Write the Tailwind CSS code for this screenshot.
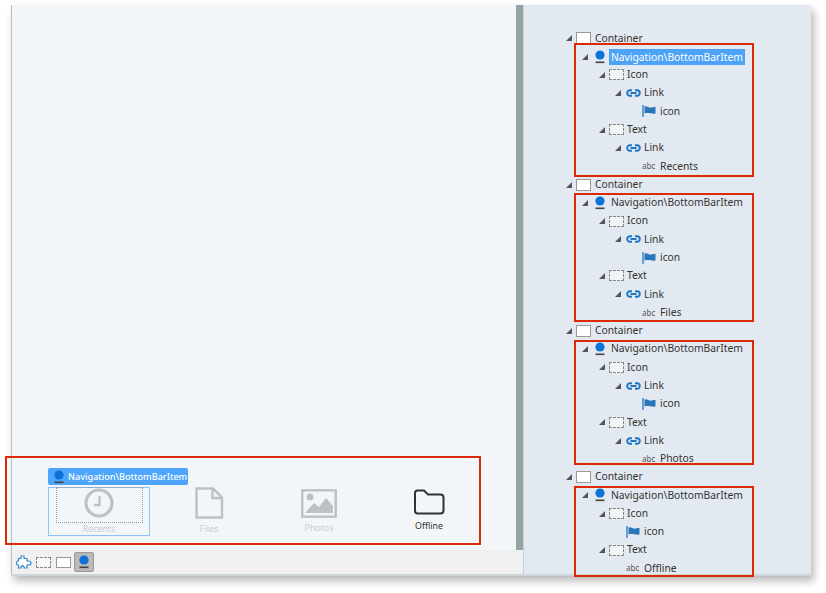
<!DOCTYPE html>
<html><head><meta charset="utf-8"><title>BottomBar</title>
<script src="https://cdn.jsdelivr.net/npm/@tailwindcss/browser@4"></script></head>
<body class="bg-white w-[826px] h-[593px] overflow-hidden relative font-['Noto_Sans',sans-serif]">
<svg width="0" height="0" class="absolute">
<symbol id="tri" viewBox="0 0 6 6"><path d="M6 0V6H0Z" fill="#555"/></symbol>
<symbol id="nav" viewBox="0 0 10 14"><circle cx="5" cy="5" r="4.6" fill="#0a72d8"/><rect x="0.5" y="11.5" width="9" height="1.6" fill="#444"/></symbol>
<symbol id="link" viewBox="0 0 15 8"><path d="M6 1.2H4a2.8 2.8 0 0 0 0 5.6h2M9 1.2h2a2.8 2.8 0 0 1 0 5.6H9M4.5 4h6" fill="none" stroke="#1f76c4" stroke-width="1.9"/></symbol>
<symbol id="flag" viewBox="0 0 14 12"><path d="M1 0V12" stroke="#2f82cc" stroke-width="1.4"/><path d="M2.5 1.5C5 .5 7 3 9 2.6L13.5 1.8V8.5C10 9.5 7 7.2 2.5 8.5Z" fill="#2a76bd"/></symbol>
</svg>

<div class="absolute left-[11px] top-[5px] w-[800px] h-[571px] flex shadow-[3px_5px_8px_rgba(0,0,0,0.28)] bg-[#f0f0f0] border-b-2 border-[#cfd6d9]">
  <div class="w-[512px] flex flex-col">
    <div class="flex flex-1 min-h-0">
      <div class="flex-1 bg-[#f2f6f9] border-l border-[#b4c0c6] flex flex-col justify-end pb-[13px] pl-[32px]">
        <div class="flex h-[50px] items-start">
          <div class="w-[110px] h-[50px] flex flex-col items-center text-[#c9cccf]">
            <svg width="30" height="30" viewBox="0 0 30 30" class="mt-[1px]"><circle cx="15" cy="15" r="13" fill="none" stroke="#bdc1c3" stroke-width="3.200"/><path d="M15.500 8V17H10" fill="none" stroke="#bdc1c3" stroke-width="2.400"/></svg>
            <span class="text-[8.800px] leading-[12px] mt-[5px]">Recents</span>
          </div>
          <div class="w-[110px] h-[50px] flex flex-col items-center text-[#c9cccf]">
            <svg width="30" height="32" viewBox="0 0 30 32"><path d="M2.500 1.500H19L28 10.500V30.500H2.500ZM18.500 1.500V11H28" fill="none" stroke="#bdc1c3" stroke-width="2.400"/></svg>
            <span class="text-[8.800px] leading-[12px] mt-[4px]">Files</span>
          </div>
          <div class="w-[110px] h-[50px] flex flex-col items-center text-[#c9cccf]">
            <svg width="36" height="29" viewBox="0 0 36 29" class="mt-[2px]"><rect x="1.300" y="1.300" width="33.400" height="26.400" fill="none" stroke="#bdc1c3" stroke-width="2.400"/><circle cx="9" cy="8" r="3.500" fill="#bdc1c3"/><path d="M4 24L13 14L18 18L25 9L32 17V24Z" fill="#bdc1c3"/></svg>
            <span class="text-[8.800px] leading-[12px] mt-[4px]">Photos</span>
          </div>
          <div class="w-[110px] h-[50px] flex flex-col items-center text-[#333]">
            <svg width="32" height="26" viewBox="0 0 32 26" class="mt-[2px]"><path d="M2 4Q2 1.500 4.500 1.500H11L15 5.500H27.500Q30.500 5.500 30.500 8.500V21.500Q30.500 24.500 27.500 24.500H4.500Q2 24.500 2 21.500Z" fill="none" stroke="#2e3338" stroke-width="2"/></svg>
            <span class="text-[8.800px] leading-[12px] mt-[5px]">Offline</span>
          </div>
        </div>
      </div>
      <div class="w-[7px] bg-[#95a3a5]"></div>
    </div>
    <div class="h-[24px] shrink-0 bg-[#f0f0f0] border-l border-[#b4c0c6] flex items-center pl-[4px]">
      <svg width="16" height="14" viewBox="0 0 16 14"><path d="M5 1H8V3.500H11V6H12.500Q15 6 15 8T12.500 10H11V13H8V11.500Q6.500 10 5 11.500V13H2.500V10H1.500Q.5 9.500 .5 8T1.500 6H2.500V3.500H5Z" fill="#fff" stroke="#3a86d0" stroke-width="1.200"/></svg>
      <div class="w-[15px] h-[11px] ml-[4px] border border-dashed border-[#888] bg-[#f8f8f8]"></div>
      <div class="w-[15px] h-[11px] ml-[5px] border border-[#999] bg-white"></div>
      <div class="w-[20px] h-[20px] ml-[3px] bg-[#b9b9b9] border border-[#999] rounded-[2px] flex items-center justify-center">
        <svg width="10" height="14"><use href="#nav"/></svg>
      </div>
    </div>
  </div>

  <div class="flex-1 bg-[#e3e9f0] border-l border-[#c8d2d8] pl-[42px] pt-[24.200px] text-[10.300px] text-[#333] overflow-hidden">
    <!-- group 1 -->
    <div class="h-[18.290px] flex items-center"><svg width="6" height="6" class="mr-[4px]"><use href="#tri"/></svg><div class="w-[15px] h-[12px] bg-white border border-[#999] mr-[4px]"></div><span>Container</span></div>
    <div class="h-[18.290px] flex items-center pl-[16px]"><svg width="6" height="6" class="mr-[7px]"><use href="#tri"/></svg><svg width="10" height="14" class="mr-[4px]"><use href="#nav"/></svg><span class="bg-[#4da3f7] text-white px-[2px] h-[16px] leading-[16px]">Navigation\BottomBarItem</span></div>
    <div class="h-[18.290px] flex items-center pl-[33px]"><svg width="6" height="6" class="mr-[4px]"><use href="#tri"/></svg><div class="w-[15px] h-[11px] bg-[#f2f5f8] border border-dashed border-[#888] mr-[3px]"></div><span>Icon</span></div>
    <div class="h-[18.290px] flex items-center pl-[49px]"><svg width="6" height="6" class="mr-[5px]"><use href="#tri"/></svg><svg width="15" height="8" class="mr-[3px]"><use href="#link"/></svg><span>Link</span></div>
    <div class="h-[18.290px] flex items-center pl-[76px]"><svg width="14" height="12" class="mr-[4px]"><use href="#flag"/></svg><span>icon</span></div>
    <div class="h-[18.290px] flex items-center pl-[33px]"><svg width="6" height="6" class="mr-[4px]"><use href="#tri"/></svg><div class="w-[15px] h-[11px] bg-[#f2f5f8] border border-dashed border-[#888] mr-[3px]"></div><span>Text</span></div>
    <div class="h-[18.290px] flex items-center pl-[49px]"><svg width="6" height="6" class="mr-[5px]"><use href="#tri"/></svg><svg width="15" height="8" class="mr-[3px]"><use href="#link"/></svg><span>Link</span></div>
    <div class="h-[18.290px] flex items-center pl-[76px]"><span class="w-[14px] mr-[4px] text-[8px] leading-none text-[#555]">abc</span><span>Recents</span></div>
    <!-- group 2 -->
    <div class="h-[18.290px] flex items-center"><svg width="6" height="6" class="mr-[4px]"><use href="#tri"/></svg><div class="w-[15px] h-[12px] bg-white border border-[#999] mr-[4px]"></div><span>Container</span></div>
    <div class="h-[18.290px] flex items-center pl-[16px]"><svg width="6" height="6" class="mr-[7px]"><use href="#tri"/></svg><svg width="10" height="14" class="mr-[4px]"><use href="#nav"/></svg><span class="px-[2px]">Navigation\BottomBarItem</span></div>
    <div class="h-[18.290px] flex items-center pl-[33px]"><svg width="6" height="6" class="mr-[4px]"><use href="#tri"/></svg><div class="w-[15px] h-[11px] bg-[#f2f5f8] border border-dashed border-[#888] mr-[3px]"></div><span>Icon</span></div>
    <div class="h-[18.290px] flex items-center pl-[49px]"><svg width="6" height="6" class="mr-[5px]"><use href="#tri"/></svg><svg width="15" height="8" class="mr-[3px]"><use href="#link"/></svg><span>Link</span></div>
    <div class="h-[18.290px] flex items-center pl-[76px]"><svg width="14" height="12" class="mr-[4px]"><use href="#flag"/></svg><span>icon</span></div>
    <div class="h-[18.290px] flex items-center pl-[33px]"><svg width="6" height="6" class="mr-[4px]"><use href="#tri"/></svg><div class="w-[15px] h-[11px] bg-[#f2f5f8] border border-dashed border-[#888] mr-[3px]"></div><span>Text</span></div>
    <div class="h-[18.290px] flex items-center pl-[49px]"><svg width="6" height="6" class="mr-[5px]"><use href="#tri"/></svg><svg width="15" height="8" class="mr-[3px]"><use href="#link"/></svg><span>Link</span></div>
    <div class="h-[18.290px] flex items-center pl-[76px]"><span class="w-[14px] mr-[4px] text-[8px] leading-none text-[#555]">abc</span><span>Files</span></div>
    <!-- group 3 -->
    <div class="h-[18.290px] flex items-center"><svg width="6" height="6" class="mr-[4px]"><use href="#tri"/></svg><div class="w-[15px] h-[12px] bg-white border border-[#999] mr-[4px]"></div><span>Container</span></div>
    <div class="h-[18.290px] flex items-center pl-[16px]"><svg width="6" height="6" class="mr-[7px]"><use href="#tri"/></svg><svg width="10" height="14" class="mr-[4px]"><use href="#nav"/></svg><span class="px-[2px]">Navigation\BottomBarItem</span></div>
    <div class="h-[18.290px] flex items-center pl-[33px]"><svg width="6" height="6" class="mr-[4px]"><use href="#tri"/></svg><div class="w-[15px] h-[11px] bg-[#f2f5f8] border border-dashed border-[#888] mr-[3px]"></div><span>Icon</span></div>
    <div class="h-[18.290px] flex items-center pl-[49px]"><svg width="6" height="6" class="mr-[5px]"><use href="#tri"/></svg><svg width="15" height="8" class="mr-[3px]"><use href="#link"/></svg><span>Link</span></div>
    <div class="h-[18.290px] flex items-center pl-[76px]"><svg width="14" height="12" class="mr-[4px]"><use href="#flag"/></svg><span>icon</span></div>
    <div class="h-[18.290px] flex items-center pl-[33px]"><svg width="6" height="6" class="mr-[4px]"><use href="#tri"/></svg><div class="w-[15px] h-[11px] bg-[#f2f5f8] border border-dashed border-[#888] mr-[3px]"></div><span>Text</span></div>
    <div class="h-[18.290px] flex items-center pl-[49px]"><svg width="6" height="6" class="mr-[5px]"><use href="#tri"/></svg><svg width="15" height="8" class="mr-[3px]"><use href="#link"/></svg><span>Link</span></div>
    <div class="h-[18.290px] flex items-center pl-[76px]"><span class="w-[14px] mr-[4px] text-[8px] leading-none text-[#555]">abc</span><span>Photos</span></div>
    <!-- group 4 -->
    <div class="h-[18.290px] flex items-center"><svg width="6" height="6" class="mr-[4px]"><use href="#tri"/></svg><div class="w-[15px] h-[12px] bg-white border border-[#999] mr-[4px]"></div><span>Container</span></div>
    <div class="h-[18.290px] flex items-center pl-[16px]"><svg width="6" height="6" class="mr-[7px]"><use href="#tri"/></svg><svg width="10" height="14" class="mr-[4px]"><use href="#nav"/></svg><span class="px-[2px]">Navigation\BottomBarItem</span></div>
    <div class="h-[18.290px] flex items-center pl-[33px]"><svg width="6" height="6" class="mr-[4px]"><use href="#tri"/></svg><div class="w-[15px] h-[11px] bg-[#f2f5f8] border border-dashed border-[#888] mr-[3px]"></div><span>Icon</span></div>
    <div class="h-[18.290px] flex items-center pl-[60px]"><svg width="14" height="12" class="mr-[4px]"><use href="#flag"/></svg><span>icon</span></div>
    <div class="h-[18.290px] flex items-center pl-[33px]"><svg width="6" height="6" class="mr-[4px]"><use href="#tri"/></svg><div class="w-[15px] h-[11px] bg-[#f2f5f8] border border-dashed border-[#888] mr-[3px]"></div><span>Text</span></div>
    <div class="h-[18.290px] flex items-center pl-[60px]"><span class="w-[14px] mr-[4px] text-[8px] leading-none text-[#555]">abc</span><span>Offline</span></div>
  </div>
</div>

<!-- selection overlays -->
<div class="absolute left-[48px] top-[487px] w-[102px] h-[49px] border border-[#8cc2f5]"></div>
<div class="absolute left-[56px] top-[487px] w-[87px] h-[36px] border border-dotted border-[#999]"></div>
<div class="absolute left-[48px] top-[468px] w-[140px] h-[17px] bg-[#4da6fb] rounded-[2px] flex items-center pl-[6px] text-[9.100px] font-medium text-white">
  <svg width="10" height="14" class="mr-[4px] shrink-0"><use href="#nav"/></svg><span class="whitespace-nowrap">Navigation\BottomBarItem</span>
</div>

<!-- annotation boxes -->
<div class="absolute left-[5px] top-[456px] w-[476px] h-[89px] border-2 border-[#dc2a06]"></div>
<div class="absolute left-[574px] top-[43px] w-[180px] h-[134px] border-2 border-[#dc2a06]"></div>
<div class="absolute left-[574px] top-[193px] w-[180px] h-[129px] border-2 border-[#dc2a06]"></div>
<div class="absolute left-[574px] top-[340px] w-[180px] h-[125px] border-2 border-[#dc2a06]"></div>
<div class="absolute left-[574px] top-[486px] w-[180px] h-[91px] border-2 border-[#dc2a06]"></div>
</body></html>
